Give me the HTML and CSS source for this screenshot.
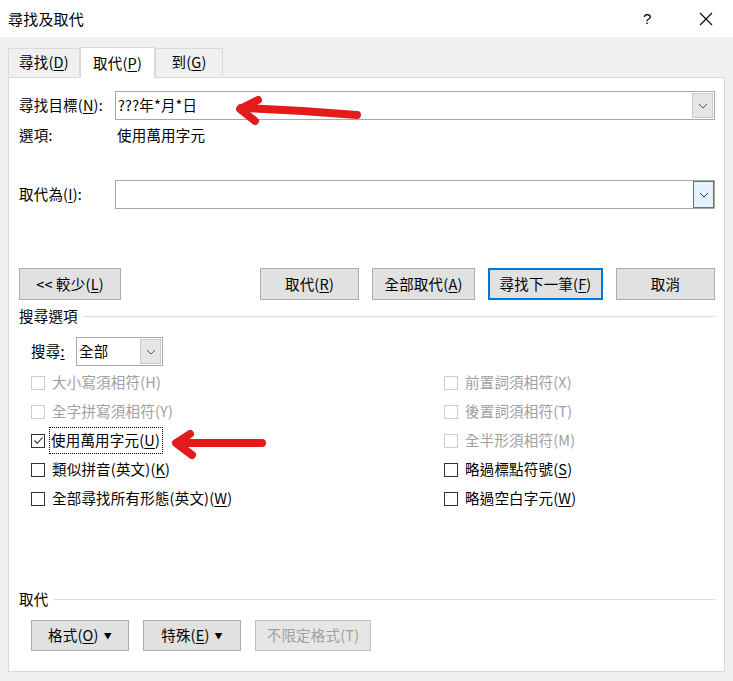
FILE: index.html
```html
<!DOCTYPE html>
<html lang="zh-Hant">
<head>
<meta charset="utf-8">
<title>尋找及取代</title>
<link rel="stylesheet" href="styles.css">
</head>
<body>
<div class="window">
  <div class="titlebar">
    <span class="title">尋找及取代</span>
    <span class="tb-help">?</span>
    <span class="tb-close">
      <svg width="14" height="14" viewBox="0 0 14 14"><path d="M1 1 L13 13 M13 1 L1 13" stroke="#000" stroke-width="1.1" fill="none"/></svg>
    </span>
  </div>
  <div class="tabs">
    <div class="tab">尋找(<u>D</u>)</div>
    <div class="tab active">取代(<u>P</u>)</div>
    <div class="tab">到(<u>G</u>)</div>
  </div>
  <div class="panel">
    <div class="field-row find-row">
      <span class="field-label">尋找目標(<u>N</u>):</span>
      <div class="combo">
        <span class="combo-text">???年*月*日</span>
        <span class="combo-btn"><svg width="10" height="6" viewBox="0 0 10 6"><path d="M1 1 L5 5 L9 1" stroke="#555" fill="none"/></svg></span>
      </div>
    </div>
    <div class="options-row">
      <span class="field-label">選項:</span>
      <span class="opt-value">使用萬用字元</span>
    </div>
    <div class="field-row replace-row">
      <span class="field-label">取代為(<u>I</u>):</span>
      <div class="combo">
        <span class="combo-text"></span>
        <span class="combo-btn focus"><svg width="10" height="6" viewBox="0 0 10 6"><path d="M1 1 L5 5 L9 1" stroke="#333" fill="none"/></svg></span>
      </div>
    </div>
    <div class="button-row">
      <button class="btn btn-less">&lt;&lt; 較少(<u>L</u>)</button>
      <div class="btn-group">
        <button class="btn btn-w99">取代(<u>R</u>)</button>
        <button class="btn btn-w103">全部取代(<u>A</u>)</button>
        <button class="btn btn-default">尋找下一筆(<u>F</u>)</button>
        <button class="btn btn-w99">取消</button>
      </div>
    </div>
    <div class="section-head search-head"><span>搜尋選項</span><div class="rule"></div></div>
    <div class="search-row">
      <span class="search-label">搜尋<u>:</u></span>
      <div class="small-combo">
        <span class="combo-text">全部</span>
        <span class="combo-btn"><svg width="10" height="6" viewBox="0 0 10 6"><path d="M1 1 L5 5 L9 1" stroke="#555" fill="none"/></svg></span>
      </div>
    </div>
    <div class="checks">
      <div class="col col-left">
        <div class="check disabled"><span class="box"></span><span>大小寫須相符(H)</span></div>
        <div class="check disabled"><span class="box"></span><span>全字拼寫須相符(Y)</span></div>
        <div class="check"><span class="box"><svg width="11" height="11" viewBox="0 0 11 11"><path d="M1.5 5.5 L4.3 8.3 L9.6 2.5" stroke="#222" stroke-width="1.1" fill="none"/></svg></span><span class="focus-label">使用萬用字元(<u>U</u>)</span></div>
        <div class="check"><span class="box"></span><span>類似拼音(英文)(<u>K</u>)</span></div>
        <div class="check"><span class="box"></span><span>全部尋找所有形態(英文)(<u>W</u>)</span></div>
      </div>
      <div class="col col-right">
        <div class="check disabled"><span class="box"></span><span>前置詞須相符(X)</span></div>
        <div class="check disabled"><span class="box"></span><span>後置詞須相符(T)</span></div>
        <div class="check disabled"><span class="box"></span><span>全半形須相符(M)</span></div>
        <div class="check"><span class="box"></span><span>略過標點符號(<u>S</u>)</span></div>
        <div class="check"><span class="box"></span><span>略過空白字元(<u>W</u>)</span></div>
      </div>
    </div>
    <div class="section-head replace-head"><span>取代</span><div class="rule"></div></div>
    <div class="bottom-buttons">
      <button class="btn btn-b">格式(<u>O</u>) <span class="tri">▼</span></button>
      <button class="btn btn-b">特殊(<u>E</u>) <span class="tri">▼</span></button>
      <button class="btn btn-dis">不限定格式(T)</button>
    </div>
  </div>
  <svg class="arrows" width="733" height="681" viewBox="0 0 733 681">
    <g stroke="#e31b1b" stroke-width="8" stroke-linecap="round" stroke-linejoin="round" fill="none">
      <path d="M357 115 Q300 110 241 108"/>
      <path d="M258 100 L240 109 L255 121"/>
      <path d="M262 443 L177 443"/>
      <path d="M190 434 L176 443 L192 455"/>
    </g>
  </svg>
</div>
</body>
</html>
```

FILE: styles.css
```css
* { box-sizing: border-box; }
html, body { margin: 0; padding: 0; }
body {
  width: 733px;
  height: 681px;
  background: #f0f0f0;
  font-family: "Noto Sans CJK TC", "Noto Sans", sans-serif;
  font-size: 14.5px;
  letter-spacing: 0.2px;
  color: #000;
  overflow: hidden;
}
u { text-decoration: underline; text-underline-offset: 2px; }
.window { position: relative; width: 733px; height: 681px; }
.titlebar {
  height: 37px;
  background: #fff;
  display: flex;
  align-items: center;
  padding-left: 8px;
}
.title { font-size: 15px; flex: 1; line-height: 1; }
.tb-help { width: 16px; font-size: 15px; margin-right: 40px; font-family: "Liberation Sans", sans-serif; }
.tb-close { width: 14px; margin-right: 20px; display: flex; }
.tabs {
  display: flex;
  align-items: flex-end;
  padding-left: 8px;
  height: 40px;
  position: relative;
  z-index: 2;
}
.tab {
  height: 28px;
  padding: 0 6px;
  display: flex;
  align-items: center;
  border: 1px solid #d9d9d9;
  border-bottom: none;
  background: #f0f0f0;
  line-height: 1;
  margin-bottom: 1px;
}
.tab:first-child { width: 72px; justify-content: center; }
.tab.active {
  width: 75px;
  height: 31px;
  background: #fff;
  justify-content: center;
  margin-bottom: -1px;
  border-left: 1px solid #d9d9d9;
  border-right: 1px solid #d9d9d9;
}
.tab:last-child { width: 68px; justify-content: center; }
.panel {
  margin: 0 8px 0 8px;
  height: 595px;
  background: #fff;
  border: 1px solid #d9d9d9;
  padding: 0 9px 0 10px;
  display: flex;
  flex-direction: column;
}
.field-row { display: flex; align-items: center; height: 29px; }
.find-row { margin-top: 13px; }
.field-label { width: 96px; line-height: 1; white-space: nowrap; }
.combo {
  flex: 1;
  height: 29px;
  border: 1px solid #a8a8a8;
  display: flex;
  align-items: stretch;
}
.combo-text { flex: 1; display: flex; align-items: center; padding-left: 2px; line-height: 1; }
.combo-btn {
  width: 21px;
  margin: 1px;
  background: #e6e6e6;
  border: 1px solid #c9c9c9;
  display: flex;
  align-items: center;
  justify-content: center;
}
.combo-btn.focus { background: #e5f1fb; border: 1px solid #3c7fb1; margin: 0; width: 21px; }
.options-row { display: flex; align-items: center; height: 20px; margin-top: 5px; }
.opt-value { padding-left: 2px; line-height: 1; }
.replace-row { margin-top: 35px; }
.button-row {
  display: flex;
  justify-content: space-between;
  margin-top: 59px;
  height: 32px;
}
.btn {
  font-family: inherit;
  font-size: 14.5px;
  letter-spacing: 0.2px;
  height: 32px;
  background: #e1e1e1;
  border: 1px solid #adadad;
  color: #000;
  padding: 0;
  line-height: 1;
  display: flex;
  align-items: center;
  justify-content: center;
  white-space: nowrap;
}
.btn-less { width: 102px; }
.btn-group { display: flex; gap: 13px; }
.btn-w99 { width: 99px; }
.btn-w103 { width: 103px; }
.btn-default { width: 115px; border: 2px solid #0078d7; }
.section-head { display: flex; align-items: center; height: 16px; gap: 6px; line-height: 1; }
.section-head .rule { flex: 1; height: 1px; background: #dcdcdc; margin-right: 0; }
.search-head { margin-top: 8px; }
.search-row { display: flex; align-items: center; height: 29px; margin-top: 13px; padding-left: 12px; }
.search-label { width: 45px; line-height: 1; }
.small-combo {
  width: 87px;
  height: 29px;
  border: 1px solid #a8a8a8;
  display: flex;
}
.checks { display: flex; margin-top: 2px; padding-left: 12px; }
.col { display: flex; flex-direction: column; }
.col-left { width: 413px; }
.check { height: 29px; display: flex; align-items: center; line-height: 1; white-space: nowrap; }
.box {
  width: 14px;
  height: 14px;
  border: 1px solid #333;
  margin-right: 7px;
  display: flex;
  align-items: center;
  justify-content: center;
  flex: none;
}
.check.disabled { color: #a0a0a0; }
.check.disabled .box { border-color: #cccccc; }
.focus-label { outline: 1px dotted #000; outline-offset: 0; padding: 5px 2px 5px 1px; margin-left: -2px; }
.replace-head { margin-top: 78px; }
.bottom-buttons { display: flex; gap: 14px; margin-top: 13px; padding-left: 12px; }
.btn-b { width: 98px; height: 31px; }
.tri { font-size: 8px; margin-left: 5px; }
.btn-dis { width: 116px; height: 31px; color: #a0a0a0; border-color: #bfbfbf; background: #e6e6e6; }
.arrows { position: absolute; left: 0; top: 0; pointer-events: none; z-index: 5; }
```
